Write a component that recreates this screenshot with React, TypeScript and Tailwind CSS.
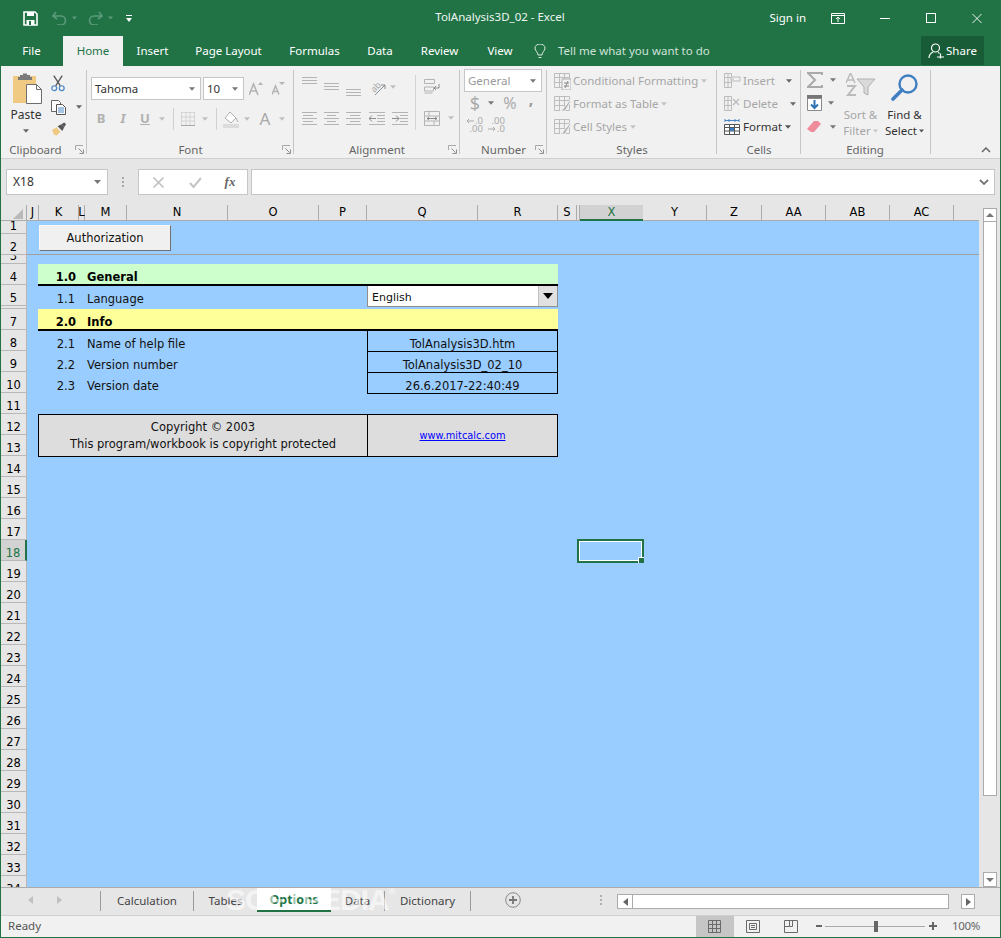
import React from "react";

const G = "#b4b4b4";
const D = "#8a8a8a";

function Caret({ c = "#9a9a9a", w = 7 }: { c?: string; w?: number }) {
  return (
    <svg width={w} height="4" viewBox="0 0 7 4" className="shrink-0">
      <path d="M0 0h7L3.5 4z" fill={c} />
    </svg>
  );
}

function Slot({ className, children }: { className: string; children?: React.ReactNode }) {
  return <div className={"flex items-center justify-center shrink-0 " + className}>{children}</div>;
}

function Launcher() {
  return (
    <svg width="9" height="9" viewBox="0 0 9 9" className="absolute right-[3px] top-[4px]">
      <path d="M.5 5V.5H8" fill="none" stroke="#a8a8a8" />
      <path d="M3.5 3.5L7.5 7.5M4.5 8.5h4v-4" fill="none" stroke="#8d8d8d" />
    </svg>
  );
}

function Group({ w, label, launcher, labelClass = "", children }: { w: string; label: string; launcher?: boolean; labelClass?: string; children: React.ReactNode }) {
  return (
    <div className={"relative flex flex-col shrink-0 h-full " + w}>
      <div className="h-[75px]">{children}</div>
      <div className={"relative h-[17px] text-[11.5px] leading-[18px] text-[#666] text-center " + labelClass}>
        {label}
        {launcher && <Launcher />}
      </div>
      <div className="absolute right-0 top-[4px] bottom-[4px] w-px bg-[#c6c6c6]" />
    </div>
  );
}

function Lines({ rows }: { rows: number[] }) {
  return (
    <svg width="15" height="16" viewBox="0 0 15 16">
      {rows.map((y, i) => (
        <path key={i} d={`M0 ${y + 0.5}H15`} stroke={G} />
      ))}
    </svg>
  );
}

function AlignBars({ kind }: { kind: "l" | "c" | "r" }) {
  const short = kind === "l" ? "M1 4.5h10M1 10.5h10" : kind === "c" ? "M3 4.5h9M3 10.5h9" : "M4 4.5h10M4 10.5h10";
  return (
    <svg width="15" height="14" viewBox="0 0 15 14">
      <path d="M0 1.5h15M0 7.5h15M0 13.5h15" stroke={G} />
      <path d={short} stroke={G} />
    </svg>
  );
}

function TableIcon({ mark }: { mark?: React.ReactNode }) {
  return (
    <svg width="17" height="18" viewBox="0 0 17 18">
      <path d="M.5 1.5h15v14H.5zM.5 5.5h15M.5 10.5h15M5.5 1.5v14M10.5 1.5v14" fill="none" stroke="#bdbdbd" />
      {mark}
    </svg>
  );
}

function CellsIcon({ mark }: { mark: React.ReactNode }) {
  return (
    <svg width="17" height="18" viewBox="0 0 17 18">
      <path d="M.5 1.5h7v4h-7zM.5 5.5h7v5h-7zM.5 10.5h7v5h-7zM4 1.5v14" fill="none" stroke="#bcbcbc" />
      {mark}
    </svg>
  );
}

function Clipboard() {
  return (
    <Group w="w-[86px]" label="Clipboard" launcher labelClass="pr-[17px]">
      <div className="flex h-full">
        <div className="flex flex-col items-center w-[50px] pt-[7px]">
          <svg width="30" height="31" viewBox="0 0 30 31" className="ml-[2px]">
            <path d="M1 3h23v27H1z" fill="#f0c982" />
            <path d="M8 4V2h3V.5h4V2h3v2h2v3H6V4z" fill="#7a7a7a" />
            <path d="M14.5 11.5h10l5 5v14h-15z" fill="#fff" stroke="#6e6e6e" />
            <path d="M24.5 11.5v5h5" fill="none" stroke="#6e6e6e" />
          </svg>
          <div className="text-[12px] leading-[16px] mt-[3px] text-[#333]">Paste</div>
          <div className="mt-[6px]"><Caret c="#666" w={6} /></div>
        </div>
        <div className="flex flex-col w-[36px]">
          <Slot className="h-[24px] mt-[5px] w-[14px]">
            <svg width="15" height="17" viewBox="0 0 15 17">
              <path d="M3 0l7 11M12 0L5 11" stroke="#555" strokeWidth="1.4" />
              <circle cx="3.5" cy="13.5" r="2.6" fill="none" stroke="#4a86c5" strokeWidth="1.3" />
              <circle cx="11.5" cy="13.5" r="2.6" fill="none" stroke="#4a86c5" strokeWidth="1.3" />
            </svg>
          </Slot>
          <div className="flex items-center h-[22px] mt-[1px]">
            <svg width="16" height="15" viewBox="0 0 16 15">
              <path d="M.5.5h7l2 2v9h-9z" fill="#fff" stroke="#666" />
              <path d="M5.5 4.5h6l3 3v7h-9z" fill="#fff" stroke="#555" />
              <path d="M7 8h6M7 10h6M7 12h6" stroke="#4a86c5" />
            </svg>
            <div className="ml-[9px]"><Caret c="#666" w={6} /></div>
          </div>
          <Slot className="h-[22px] w-[16px]">
            <svg width="17" height="15" viewBox="0 0 17 15">
              <path d="M1 8l5-3 4 5-4 4-3-1-1-3z" fill="#f0c982" />
              <path d="M7 4l4-2 3 3-2 4z" fill="#555" />
              <path d="M11 2l3-2 2 2-2 3z" fill="#555" />
            </svg>
          </Slot>
        </div>
      </div>
    </Group>
  );
}

function Combo({ text, className, textClass = "text-[#333]" }: { text: string; className: string; textClass?: string }) {
  return (
    <div className={"flex items-center justify-between bg-white border border-[#c6c6c6] pl-[3px] pr-[5px] text-[11.5px] " + className}>
      <span className={textClass}>{text}</span>
      <Caret c="#777" w={6} />
    </div>
  );
}

function FontGroup() {
  return (
    <Group w="w-[207px]" label="Font" launcher>
      <div className="flex items-center mt-[11px] ml-[4px] h-[23px]">
        <Combo text="Tahoma" className="w-[110px] h-[23px]" />
        <Combo text="10" className="w-[41px] h-[23px] ml-[2px]" />
        <Slot className="w-[22px] ml-[1px]">
          <svg width="15" height="14" viewBox="0 0 15 14">
            <path d="M0 13L4.5 2 9 13M2 9h5" fill="none" stroke={G} strokeWidth="1.6" />
            <path d="M9 3l2.5-3L14 3z" fill={G} />
          </svg>
        </Slot>
        <Slot className="w-[22px]">
          <svg width="13" height="13" viewBox="0 0 13 13">
            <path d="M0 12.5L3.5 4 7 12.5M1.5 9.5h4" fill="none" stroke={G} strokeWidth="1.5" />
            <path d="M7 0h6l-3 3z" fill={G} />
          </svg>
        </Slot>
      </div>
      <div className="flex items-center mt-[8px] ml-[3px] h-[22px] text-[#b0b0b0]">
        <Slot className="w-[22px] font-bold text-[13px]">B</Slot>
        <Slot className="w-[22px] italic font-bold text-[13px]">I</Slot>
        <Slot className="w-[22px]"><span className="font-bold text-[13px] underline">U</span></Slot>
        <Slot className="w-[12px]"><Caret w={6} c="#c0c0c0" /></Slot>
        <Slot className="w-[10px]"><div className="w-px h-[22px] bg-[#d0d0d0]" /></Slot>
        <Slot className="w-[20px]">
          <svg width="14" height="14" viewBox="0 0 14 14">
            <path d="M.5.5h13v13H.5zM.5 5h13M.5 9h13M5 .5v13M9 .5v13" fill="none" stroke="#bdbdbd" strokeDasharray="1 1" />
            <path d="M0 13.5h14" stroke="#a8a8a8" />
          </svg>
        </Slot>
        <Slot className="w-[13px]"><Caret w={6} c="#c0c0c0" /></Slot>
        <Slot className="w-[10px]"><div className="w-px h-[22px] bg-[#d0d0d0]" /></Slot>
        <Slot className="w-[20px]">
          <svg width="16" height="17" viewBox="0 0 16 17">
            <path d="M2 7l5-6 6 6-5 5z" fill="#fff" stroke="#b0b0b0" />
            <path d="M13 7l2 4" stroke="#b0b0b0" />
            <path d="M0 13h16v4H0z" fill="#dcdcdc" />
          </svg>
        </Slot>
        <Slot className="w-[12px]"><Caret w={6} c="#c0c0c0" /></Slot>
        <Slot className="w-[24px] text-[17px] text-[#aaa]">A</Slot>
        <Slot className="w-[10px]"><Caret w={6} c="#c0c0c0" /></Slot>
      </div>
    </Group>
  );
}

function Alignment() {
  return (
    <Group w="w-[166px]" label="Alignment" launcher>
      <div className="flex items-start h-full">
        <div className="w-[117px] ml-[4px]">
          <div className="flex h-[22px] mt-[10px] items-center">
            <Slot className="w-[22px] pb-[6px]"><Lines rows={[1, 4, 7]} /></Slot>
            <Slot className="w-[22px]"><Lines rows={[4, 7, 10]} /></Slot>
            <Slot className="w-[22px] pt-[6px]"><Lines rows={[7, 10, 13]} /></Slot>
            <Slot className="w-[24px] ml-[1px]">
              <svg width="17" height="15" viewBox="0 0 17 15" className="overflow-visible">
                <text x="2" y="11" fontSize="9" fill="#a8a8a8" transform="rotate(-45 6 8)">ab</text>
                <path d="M6 15L16 5M16 5h-4M16 5v4" fill="none" stroke={D} />
              </svg>
            </Slot>
            <Slot className="w-[8px]"><Caret w={6} c="#c0c0c0" /></Slot>
          </div>
          <div className="flex h-[22px] mt-[9px] items-center">
            <Slot className="w-[22px]"><AlignBars kind="l" /></Slot>
            <Slot className="w-[22px]"><AlignBars kind="c" /></Slot>
            <Slot className="w-[22px]"><AlignBars kind="r" /></Slot>
            <Slot className="w-[24px] ml-[1px]">
              <svg width="16" height="14" viewBox="0 0 16 14">
                <path d="M0 1.5h16M0 13.5h16M8 4.5h8M8 7.5h8M8 10.5h8" stroke={G} />
                <path d="M0 7.5h7M3 4.5l-3 3 3 3" fill="none" stroke={D} />
              </svg>
            </Slot>
            <Slot className="w-[22px]">
              <svg width="16" height="14" viewBox="0 0 16 14">
                <path d="M0 1.5h16M0 13.5h16M8 4.5h8M8 7.5h8M8 10.5h8" stroke={G} />
                <path d="M0 7.5h7M4 4.5l3 3-3 3" fill="none" stroke={D} />
              </svg>
            </Slot>
          </div>
        </div>
        <div className="w-px h-[55px] bg-[#d4d4d4] mt-[9px]" />
        <div className="w-[40px]">
          <div className="flex h-[22px] mt-[10px] items-center">
            <Slot className="w-[31px]">
              <svg width="16" height="16" viewBox="0 0 16 16">
                <path d="M.5.5h10v4H.5zM.5 8h9v4H.5zM.5 14h8" fill="none" stroke={G} />
                <path d="M15 5v4h-5M12 7l-2 2 2 2" fill="none" stroke={D} />
              </svg>
            </Slot>
          </div>
          <div className="flex h-[22px] mt-[9px] items-center">
            <Slot className="w-[31px]">
              <svg width="16" height="15" viewBox="0 0 16 15">
                <path d="M.5.5h15v14H.5zM.5 5h15M.5 10h15M5 .5V5M10 10v4.5" fill="none" stroke={G} />
                <path d="M3 7.5h10M5 6L3 7.5 5 9M11 6l2 1.5L11 9" fill="none" stroke={D} />
              </svg>
            </Slot>
            <Slot className="w-[8px]"><Caret w={6} c="#c0c0c0" /></Slot>
          </div>
        </div>
      </div>
    </Group>
  );
}

function ArrowL() {
  return <svg width="8" height="6" viewBox="0 0 8 6" className="mr-[1px]"><path d="M8 3H1M3 1L1 3l2 2" fill="none" stroke="#aaa" /></svg>;
}
function ArrowR() {
  return <svg width="8" height="6" viewBox="0 0 8 6" className="mr-[1px]"><path d="M0 3h7M5 1l2 2-2 2" fill="none" stroke="#aaa" /></svg>;
}

function NumberGroup() {
  return (
    <Group w="w-[87px]" label="Number" launcher>
      <Combo text="General" className="w-[78px] h-[23px] mt-[3px] ml-[4px]" textClass="text-[#999]" />
      <div className="flex items-center h-[22px] ml-[4px] text-[#aaa]">
        <Slot className="w-[22px] text-[18px]">$</Slot>
        <Slot className="w-[10px]"><Caret w={6} c="#777" /></Slot>
        <Slot className="w-[24px] ml-[2px] text-[16px]">%</Slot>
        <Slot className="w-[18px] text-[16px] font-bold text-[#999] pb-[9px]">,</Slot>
      </div>
      <div className="flex items-center h-[22px] ml-[6px] text-[9.5px] leading-[8px] text-[#aaa]">
        <div className="flex flex-col items-end w-[17px]">
          <div className="flex items-center"><ArrowL />.0</div>
          <div>.00</div>
        </div>
        <div className="flex flex-col items-end w-[17px] ml-[5px]">
          <div>.00</div>
          <div className="flex items-center"><ArrowR />.0</div>
        </div>
      </div>
    </Group>
  );
}

function Row({ icon, text, dim = true, caretClass = "ml-[3px]", caretColor = "#c4c4c4" }: { icon: React.ReactNode; text: string; dim?: boolean; caretClass?: string; caretColor?: string }) {
  return (
    <div className="flex items-center h-[23px] pl-[7px]">
      {icon}
      <span className={"ml-[2px] text-[11.5px] whitespace-nowrap " + (dim ? "text-[#a6a6a6]" : "text-[#333]")}>{text}</span>
      <div className={caretClass}><Caret w={6} c={caretColor} /></div>
    </div>
  );
}

function Styles() {
  const brush = <path d="M9 14l7-9 1 1-6 10H6z" fill="#b0b0b0" stroke="#f1f1f1" />;
  return (
    <Group w="w-[170px]" label="Styles">
      <div className="pt-[3px]">
        <Row text="Conditional Formatting" icon={<TableIcon mark={<><path d="M8 7h9v11H8z" fill="#f1f1f1" stroke="#b0b0b0" /><path d="M10 11h5M10 14h5M14 9l-3 7" stroke={D} fill="none" /></>} />} />
        <Row text="Format as Table" icon={<TableIcon mark={brush} />} />
        <Row text="Cell Styles" icon={<TableIcon mark={brush} />} />
      </div>
    </Group>
  );
}

function Cells() {
  return (
    <Group w="w-[84px]" label="Cells">
      <div className="pt-[3px]">
        <Row text="Insert" caretClass="ml-[11px]" caretColor="#666" icon={<CellsIcon mark={<path d="M7 5h9v4H7zM7 7h3" fill="#f1f1f1" stroke="#bbb" />} />} />
        <Row text="Delete" caretClass="ml-[12px]" caretColor="#666" icon={<CellsIcon mark={<path d="M9 4l6 6M15 4l-6 6" stroke="#bbb" strokeWidth="1.3" />} />} />
        <Row
          text="Format"
          dim={false}
          caretClass="ml-[3px]"
          caretColor="#555"
          icon={
            <svg width="17" height="18" viewBox="0 0 17 18">
              <path d="M1 2.5h14M1 1v3M15 1v3M5 1v3M11 1v3" stroke="#4a86c5" />
              <path d="M.5 6.5h15v10H.5zM.5 9.5h15M.5 13h15M5.5 6.5v10M10.5 6.5v10" fill="#fff" stroke="#555" />
              <path d="M6 10h4v3H6z" fill="#3f7fc1" />
            </svg>
          }
        />
      </div>
    </Group>
  );
}

function Editing() {
  return (
    <Group w="w-[130px]" label="Editing" labelClass="pr-[2px]">
      <div className="flex h-full">
        <div className="w-[38px] pt-[2px] pl-[6px]">
          <div className="flex items-center h-[23px]">
            <svg width="16" height="16" viewBox="0 0 16 16"><path d="M15 3V1H1l7 7-7 7h14v-2" fill="none" stroke="#aaa" strokeWidth="2" /></svg>
            <div className="ml-[7px]"><Caret w={6} c="#777" /></div>
          </div>
          <div className="flex items-center h-[24px]">
            <svg width="15" height="16" viewBox="0 0 15 16">
              <path d="M0 0h15v4H0z" fill="#777" />
              <path d="M.5 3.5h14v12H.5z" fill="#fff" stroke="#8a8a8a" />
              <path d="M7.5 5v8M4 9.5L7.5 13 11 9.5" fill="none" stroke="#2f73b5" strokeWidth="2" />
            </svg>
            <div className="ml-[6px]"><Caret w={6} c="#777" /></div>
          </div>
          <div className="flex items-center h-[23px]">
            <svg width="15" height="13" viewBox="0 0 15 13">
              <path d="M0 9l7-8h4l3 3-7 8H4z" fill="#ee8c9c" />
            </svg>
            <div className="ml-[8px]"><Caret w={6} c="#777" /></div>
          </div>
        </div>
        <div className="flex flex-col items-center w-[43px] pt-[7px] text-[11.5px] leading-[16px] text-[#a6a6a6]">
          <svg width="30" height="24" viewBox="0 0 30 24" className="mb-[10px]">
            <path d="M0 10L4.5 0 9 10M2 7h5" fill="none" stroke="#bbb" strokeWidth="1.5" />
            <path d="M1 13h8L2 22h8" fill="none" stroke="#bbb" strokeWidth="2" />
            <path d="M11 6h18l-7 8v8l-4-2v-6z" fill="#dadada" stroke="#b0b0b0" />
          </svg>
          <span>Sort &amp;</span>
          <span className="flex items-center">Filter<span className="ml-[2px]"><Caret w={5} c="#c4c4c4" /></span></span>
        </div>
        <div className="flex flex-col items-center w-[45px] pt-[7px] text-[11.5px] leading-[16px] text-[#333]">
          <svg width="28" height="28" viewBox="0 0 28 28" className="mb-[6px]">
            <circle cx="17" cy="11" r="8.5" fill="none" stroke="#3f7fc1" strokeWidth="2.4" />
            <path d="M11 17l-9 9" stroke="#3f7fc1" strokeWidth="3.6" strokeLinecap="round" />
          </svg>
          <span>Find &amp;</span>
          <span className="flex items-center">Select<span className="ml-[2px]"><Caret w={5} c="#555" /></span></span>
        </div>
      </div>
    </Group>
  );
}

function Ribbon() {
  return (
    <div className="relative flex h-[92px] bg-[#f1f1f1]">
      <Clipboard />
      <FontGroup />
      <Alignment />
      <NumberGroup />
      <Styles />
      <Cells />
      <Editing />
      <div className="flex-1 flex items-end justify-end pr-[9px] pb-[5px]">
        <svg width="10" height="6" viewBox="0 0 10 6"><path d="M1 5l4-4 4 4" fill="none" stroke="#666" strokeWidth="1.5" /></svg>
      </div>
    </div>
  );
}

function TitleBar() {
  return (
    <div className="relative flex items-center h-[36px] text-white text-[11.5px]">
      <Slot className="w-[16px] ml-[22px]">
        <svg width="15" height="15" viewBox="0 0 15 15">
          <path d="M1 1h11l2 2v11H1z" fill="none" stroke="#fff" strokeWidth="1.6" />
          <path d="M4 1h7v4H4zM3.5 9h8v5h-8z" fill="#fff" />
          <path d="M6 10h2v4H6z" fill="#217346" />
        </svg>
      </Slot>
      <Slot className="w-[16px] ml-[13px]">
        <svg width="15" height="14" viewBox="0 0 15 14"><path d="M4 1L1 5l4 3M1 5h8a4.5 4.5 0 0 1 0 9H5" fill="none" stroke="#5b9a7b" strokeWidth="1.6" /></svg>
      </Slot>
      <Slot className="w-[8px] ml-[3px]"><Caret w={5} c="#5b9a7b" /></Slot>
      <Slot className="w-[16px] ml-[9px]">
        <svg width="15" height="14" viewBox="0 0 15 14"><path d="M11 1l3 4-4 3M14 5H6a4.5 4.5 0 0 0 0 9h4" fill="none" stroke="#5b9a7b" strokeWidth="1.6" /></svg>
      </Slot>
      <Slot className="w-[8px] ml-[3px]"><Caret w={5} c="#5b9a7b" /></Slot>
      <Slot className="w-[8px] ml-[11px]">
        <svg width="6" height="7" viewBox="0 0 6 7"><path d="M0 .5h6" stroke="#fff" /><path d="M0 3h6L3 7z" fill="#fff" /></svg>
      </Slot>
      <div className="absolute left-0 right-0 top-0 h-[33px] flex items-center justify-center pr-[1px] text-[#eef5f1] pointer-events-none">TolAnalysis3D_02 - Excel</div>
      <div className="flex-1" />
      <span className="mr-[25px] pb-[1px]">Sign in</span>
      <Slot className="w-[14px] mr-[35px]">
        <svg width="14" height="11" viewBox="0 0 14 11"><path d="M.5.5h13v10H.5zM.5 2.5h13M7 9V4.5M5 6l2-2 2 2" fill="none" stroke="#fff" /></svg>
      </Slot>
      <Slot className="w-[10px] mr-[36px]"><div className="w-[10px] h-px bg-white" /></Slot>
      <Slot className="w-[10px] mr-[36px]"><div className="w-[10px] h-[10px] border border-white" /></Slot>
      <Slot className="w-[10px] mr-[19px]">
        <svg width="11" height="11" viewBox="0 0 11 11"><path d="M.5.5l10 10M10.5.5l-10 10" stroke="#fff" /></svg>
      </Slot>
    </div>
  );
}

const tabs: [string, string][] = [
  ["File", "w-[63px]"],
  ["Home", "w-[60px]"],
  ["Insert", "w-[59px]"],
  ["Page Layout", "w-[93px]"],
  ["Formulas", "w-[79px]"],
  ["Data", "w-[52px]"],
  ["Review", "w-[67px]"],
  ["View", "w-[54px]"],
];

function TabBar() {
  return (
    <div className="flex h-[30px] text-[11.5px] text-white">
      {tabs.map(([t, w]) => (
        <div key={t} className={"flex items-center justify-center " + w + (t === "Home" ? " bg-[#f1f1f1] text-[#217346]" : "")}>{t}</div>
      ))}
      <Slot className="w-[14px] ml-[6px]">
        <svg width="12" height="15" viewBox="0 0 12 15">
          <path d="M4 11c0-3-3-4-3-7a5 4 0 0 1 10 0c0 3-3 4-3 7zM4.5 13.5h3" fill="none" stroke="#dce9e2" />
        </svg>
      </Slot>
      <div className="flex items-center ml-[11px] text-[#cfe2d8]">Tell me what you want to do</div>
      <div className="flex-1" />
      <div className="flex items-center justify-center w-[63px] h-[29px] mr-[17px] bg-[#185c37]">
        <svg width="16" height="16" viewBox="0 0 16 16" className="mr-[2px]">
          <circle cx="7.5" cy="5" r="4" fill="none" stroke="#fff" strokeWidth="1.2" />
          <path d="M1 15c0-3 2-5 4-6M10 9.5c.5.2 1 .5 1.5 1M9 14h7M12.5 10.5v5" fill="none" stroke="#fff" strokeWidth="1.2" />
        </svg>
        Share
      </div>
    </div>
  );
}

function FormulaBar() {
  return (
    <div className="flex items-start h-[47px] bg-[#e6e6e6] border-t border-[#d0d0d0] pt-[10px] text-[12px]">
      <div className="flex items-center justify-between w-[102px] h-[26px] ml-[5px] bg-white border border-[#c6c6c6] pl-[6px] pr-[6px] text-[#333]">
        X18
        <Caret c="#777" />
      </div>
      <Slot className="w-[30px] h-[26px]">
        <svg width="2" height="10" viewBox="0 0 2 10"><path d="M0 0h2v2H0zM0 4h2v2H0zM0 8h2v2H0z" fill="#a8a8a8" /></svg>
      </Slot>
      <div className="flex items-center w-[110px] h-[26px] bg-white border border-[#c6c6c6]">
        <Slot className="w-[38px]">
          <svg width="11" height="11" viewBox="0 0 11 11"><path d="M.5.5l10 10M10.5.5l-10 10" stroke="#c4c4c4" strokeWidth="1.6" /></svg>
        </Slot>
        <Slot className="w-[36px]">
          <svg width="13" height="11" viewBox="0 0 13 11"><path d="M1 6l3.5 4L12 1" fill="none" stroke="#c4c4c4" strokeWidth="2" /></svg>
        </Slot>
        <Slot className="w-[34px] italic text-[13px] font-['Liberation_Serif',serif] text-[#666] font-bold">fx</Slot>
      </div>
      <div className="flex items-center justify-end w-[744px] h-[26px] ml-[3px] bg-white border border-[#c6c6c6] pr-[5px]">
        <svg width="10" height="6" viewBox="0 0 10 6"><path d="M1 1l4 4 4-4" fill="none" stroke="#777" strokeWidth="1.8" /></svg>
      </div>
    </div>
  );
}

const columns: [string, number][] = [
  ["J", 12], ["K", 40], ["L", 6], ["M", 42], ["N", 101], ["O", 91], ["P", 48], ["Q", 111], ["R", 80], ["S", 19],
  ["X", 63], ["Y", 64], ["Z", 55], ["AA", 64], ["AB", 64], ["AC", 64],
];

function ColumnHeader() {
  return (
    <div className="flex h-[16px] bg-[#e6e6e6] font-['DejaVu_Sans',sans-serif] text-[11.5px] text-black">
      <div className="relative w-[26px] border-r border-b border-[#ababab] overflow-hidden shrink-0">
        <svg width="10" height="10" viewBox="0 0 10 10" className="absolute right-[3px] bottom-[1px]"><path d="M10 0v10H0z" fill="#b9b9b9" /></svg>
      </div>
      {columns.map(([c, w]) => (
        <React.Fragment key={c}>
          {c === "X" && <div className="w-[3px] border-r border-b border-[#ababab]" />}
          <div
            style={{ width: w }}
            className={
              "flex items-center justify-center shrink-0 pt-px " +
              (c === "X" ? "bg-[#d2d2d2] text-[#217346] border-b-2 border-b-[#217346]" : "border-r border-b border-[#ababab]")
            }
          >
            {c}
          </div>
        </React.Fragment>
      ))}
      <div className="flex-1 border-b border-[#ababab]" />
    </div>
  );
}

const rowHeaders: [string, string][] = [
  ["1", "h-[13px]"], ["2", "h-[21px]"], ["3", "h-[9px]"], ["4", "h-[21px]"], ["5", "h-[21px]"], ["6", "h-[3px]"], ["7", "h-[21px]"],
  ...Array.from({ length: 27 }, (_, i): [string, string] => [String(i + 8), "h-[21px]"]),
];

function RowHeader() {
  return (
    <div className="w-[26px] shrink-0 bg-[#e6e6e6] overflow-hidden font-['DejaVu_Sans',sans-serif] text-[11.5px] leading-[12px] text-black">
      {rowHeaders.map(([r, h]) => (
        <div
          key={r}
          className={
            "flex items-end justify-center overflow-hidden border-b pb-px " + h + (r === "18" ? " bg-[#d2d2d2] text-[#217346] border-r-2 border-r-[#217346] border-b-[#b8b8b8]" : " border-r border-[#b8b8b8]")
          }
        >
          {r !== "6" && r}
        </div>
      ))}
    </div>
  );
}

function Section({ bg, num, title }: { bg: string; num: string; title: string }) {
  return (
    <div className={"flex items-end h-[22px] border-b-2 border-black font-bold text-black " + bg}>
      <div className="w-[38px] text-right">{num}</div>
      <div className="ml-[11px]">{title}</div>
    </div>
  );
}

function InfoRow({ num, label, value }: { num: string; label: string; value: string }) {
  return (
    <div className="flex h-[21px] text-[#111]">
      <div className="flex items-end w-[329px] pb-[1px]">
        <div className="w-[37px] text-right">{num}</div>
        <div className="ml-[12px]">{label}</div>
      </div>
      <div className="flex items-end justify-center w-[191px] border-x border-b border-black">{value}</div>
    </div>
  );
}

function Sheet() {
  return (
    <div className="relative flex-1 bg-[#99ccff] overflow-hidden font-['DejaVu_Sans',sans-serif] text-[11.5px] leading-[14px]">
      <div className="h-[34px] border-b border-[#a0a0a0] pl-[12px] pt-[4px]">
        <div className="flex items-center justify-center w-[132px] h-[26px] bg-[#f0f0f0] border border-[#f8f8f8] border-r-[#707070] border-b-[#707070] text-[#111]">Authorization</div>
      </div>
      <div className="w-[520px] ml-[11px] mt-[9px]">
        <Section bg="bg-[#ccffcc]" num="1.0" title="General" />
        <div className="flex h-[21px] text-[#111]">
          <div className="flex items-end w-[329px] pb-[1px]">
            <div className="w-[37px] text-right">1.1</div>
            <div className="ml-[12px]">Language</div>
          </div>
          <div className="flex items-center justify-between w-[191px] bg-white border border-[#909090] border-t-0 pl-[4px] text-[11px]">
            <span className="pt-[3px]">English</span>
            <div className="flex items-center justify-center w-[19px] h-full bg-[#e0e0e0] border-l border-[#c0c0c0]">
              <svg width="10" height="6" viewBox="0 0 10 6"><path d="M0 0h10L5 6z" fill="#000" /></svg>
            </div>
          </div>
        </div>
        <div className="h-[2px]" />
        <Section bg="bg-[#ffff99]" num="2.0" title="Info" />
        <InfoRow num="2.1" label="Name of help file" value="TolAnalysis3D.htm" />
        <InfoRow num="2.2" label="Version number" value="TolAnalysis3D_02_10" />
        <InfoRow num="2.3" label="Version date" value="26.6.2017-22:40:49" />
        <div className="h-[20px]" />
        <div className="flex h-[43px] bg-[#dddddd] border border-black text-[#111]">
          <div className="flex flex-col items-center justify-center w-[329px] border-r border-black leading-[17px]">
            <span>Copyright © 2003</span>
            <span>This program/workbook is copyright protected</span>
          </div>
          <div className="flex flex-1 items-center justify-center text-[9.8px] text-[#0000ff] underline">www.mitcalc.com</div>
        </div>
      </div>
      <div className="absolute left-[550px] top-[318px] w-[67px] h-[24px] border-2 border-[#217346]">
        <div className="w-full h-full border border-white" />
        <div className="absolute -right-[2px] -bottom-[2px] w-[6px] h-[6px] bg-[#217346] border border-white border-r-0 border-b-0" />
      </div>
    </div>
  );
}

function VScroll() {
  return (
    <div className="w-[21px] shrink-0 bg-[#e6e6e6] flex flex-col items-center pl-[4px] pr-[3px]">
      <div className="flex items-center justify-center w-[14px] h-[14px] mt-[3px] bg-white border border-[#ababab]">
        <svg width="8" height="4" viewBox="0 0 8 4"><path d="M4 0l4 4H0z" fill="#777" /></svg>
      </div>
      <div className="w-[14px] h-[574px] bg-white border-x border-b border-[#ababab]" />
      <div className="flex-1" />
      <div className="flex items-center justify-center w-[14px] h-[15px] bg-white border border-[#ababab]">
        <svg width="8" height="4" viewBox="0 0 8 4"><path d="M0 0h8L4 4z" fill="#777" /></svg>
      </div>
    </div>
  );
}

function TabSep() {
  return <div className="w-px h-[20px] bg-[#9a9a9a] shrink-0" />;
}

function SheetTabs() {
  return (
    <div className="relative flex items-start h-[28px] bg-[#e6e6e6] border-t border-[#ababab] text-[11.5px] text-[#444]">
      <Slot className="w-[10px] h-[24px] ml-[24px]"><svg width="5" height="8" viewBox="0 0 5 8"><path d="M5 0v8L0 4z" fill="#c0c0c0" /></svg></Slot>
      <Slot className="w-[10px] h-[24px] ml-[19px]"><svg width="5" height="8" viewBox="0 0 5 8"><path d="M0 0v8l5-4z" fill="#c0c0c0" /></svg></Slot>
      <div className="ml-[36px] mt-[3px]"><TabSep /></div>
      <div className="w-[92px] h-[24px] flex items-center justify-center pt-[1px]">Calculation</div>
      <div className="mt-[3px]"><TabSep /></div>
      <div className="w-[63px] h-[24px] flex items-center justify-center pt-[1px]">Tables</div>
      <div className="flex items-center justify-center w-[74px] h-[24px] pt-[3px] bg-white border-b-2 border-[#217346] text-[#217346] font-bold text-[12.5px]">Options</div>
      <div className="w-[53px] h-[24px] flex items-center justify-center pt-[1px]">Data</div>
      <div className="mt-[3px]"><TabSep /></div>
      <div className="w-[85px] h-[24px] flex items-center justify-center pt-[1px]">Dictionary</div>
      <div className="mt-[3px]"><TabSep /></div>
      <Slot className="w-[16px] h-[24px] ml-[34px]">
        <svg width="16" height="16" viewBox="0 0 16 16"><circle cx="8" cy="8" r="7.3" fill="none" stroke="#888" /><path d="M8 4v8M4 8h8" stroke="#777" strokeWidth="1.8" /></svg>
      </Slot>
      <Slot className="w-[2px] h-[24px] ml-[79px]">
        <svg width="2" height="10" viewBox="0 0 2 10"><path d="M0 0h2v2H0zM0 4h2v2H0zM0 8h2v2H0z" fill="#b0b0b0" /></svg>
      </Slot>
      <div className="flex ml-[15px] mt-[6px] h-[15px] w-[358px]">
        <div className="flex items-center justify-center w-[16px] bg-white border border-[#ababab]"><svg width="5" height="8" viewBox="0 0 5 8"><path d="M5 0v8L0 4z" fill="#666" /></svg></div>
        <div className="w-[316px] bg-white border-y border-r border-[#ababab]" />
        <div className="w-[12px]" />
        <div className="flex items-center justify-center w-[14px] bg-white border border-[#ababab]"><svg width="5" height="8" viewBox="0 0 5 8"><path d="M0 0v8l5-4z" fill="#666" /></svg></div>
      </div>
      <div className="absolute left-[225px] -top-[6px] text-[30px] leading-[36px] font-bold tracking-[-1px] text-white/55 pointer-events-none font-['Liberation_Sans',sans-serif]">
        SOFTPEDIA<span className="align-top text-[9px] leading-[20px] tracking-normal">®</span>
      </div>
    </div>
  );
}

function StatusBar() {
  return (
    <div className="flex items-center h-[22px] pb-[1px] bg-[#f1f1f1] border-t border-[#d0d0d0] text-[11.5px] text-[#555]">
      <span className="ml-[7px]">Ready</span>
      <div className="flex-1" />
      <Slot className="w-[38px] h-[21px] bg-[#c6c6c6]">
        <svg width="13" height="13" viewBox="0 0 13 13"><path d="M.5.5h12v12H.5zM.5 4.5h12M.5 8.5h12M4.5.5v12M8.5.5v12" fill="none" stroke="#6a6a6a" /></svg>
      </Slot>
      <Slot className="w-[38px] h-[21px]">
        <svg width="14" height="13" viewBox="0 0 14 13"><path d="M.5.5h13v12H.5zM3.5 3.5h7v6h-7zM5 5.5h4M5 7.5h4" fill="none" stroke="#6a6a6a" /></svg>
      </Slot>
      <Slot className="w-[38px] h-[21px]">
        <svg width="14" height="13" viewBox="0 0 14 13"><path d="M.5.5h13v12H.5zM5.5.5v6h3v-6M.5 6.5h5" fill="none" stroke="#6a6a6a" /></svg>
      </Slot>
      <div className="ml-[6px] w-[6px] h-[2px] bg-[#666]" />
      <div className="relative flex items-center ml-[3px] w-[100px] h-px bg-[#aaa]">
        <div className="absolute left-[49px] w-[4px] h-[11px] bg-[#666]" />
      </div>
      <svg width="8" height="8" viewBox="0 0 8 8" className="ml-[4px]"><path d="M4 0v8M0 4h8" stroke="#666" strokeWidth="2" /></svg>
      <span className="ml-[15px] mr-[20px] text-[#666] tracking-[-0.3px]">100%</span>
    </div>
  );
}

export default function App() {
  return (
    <div className="flex flex-col w-[1001px] h-[938px] overflow-hidden bg-[#217346] font-['Noto_Sans',sans-serif]">
      <TitleBar />
      <TabBar />
      <div className="flex flex-col flex-1 mx-px mb-px min-h-0">
        <Ribbon />
        <FormulaBar />
        <div className="flex flex-1 min-h-0 bg-[#e6e6e6]">
          <div className="flex flex-col flex-1 min-w-0">
            <ColumnHeader />
            <div className="flex flex-1 min-h-0">
              <RowHeader />
              <Sheet />
            </div>
          </div>
          <VScroll />
        </div>
        <SheetTabs />
        <StatusBar />
      </div>
    </div>
  );
}
